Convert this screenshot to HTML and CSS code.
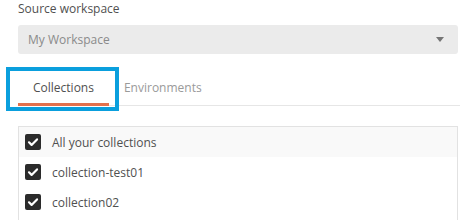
FILE: index.html
```html
<!DOCTYPE html>
<html>
<head>
<meta charset="utf-8">
<link rel="stylesheet" href="styles.css">
</head>
<body>
<div class="panel">
  <div class="label">Source workspace</div>
  <div class="select">
    <span class="select-value">My Workspace</span>
    <svg class="caret" width="8" height="5" viewBox="0 0 8 5"><path d="M0 0h8L4 5z" fill="#757575"/></svg>
  </div>
  <div class="tabs">
    <div class="tab active">Collections</div>
    <div class="tab">Environments</div>
    <div class="highlight"></div>
  </div>
  <div class="list">
    <div class="row head">
      <span class="check"><svg width="16" height="16" viewBox="0 0 16 16"><path d="M4 8.3l2.6 2.6L12 5.4" fill="none" stroke="#fff" stroke-width="2.2" stroke-linecap="round" stroke-linejoin="round"/></svg></span>
      <span class="name">All your collections</span>
    </div>
    <div class="row">
      <span class="check"><svg width="16" height="16" viewBox="0 0 16 16"><path d="M4 8.3l2.6 2.6L12 5.4" fill="none" stroke="#fff" stroke-width="2.2" stroke-linecap="round" stroke-linejoin="round"/></svg></span>
      <span class="name">collection-test01</span>
    </div>
    <div class="row">
      <span class="check"><svg width="16" height="16" viewBox="0 0 16 16"><path d="M4 8.3l2.6 2.6L12 5.4" fill="none" stroke="#fff" stroke-width="2.2" stroke-linecap="round" stroke-linejoin="round"/></svg></span>
      <span class="name">collection02</span>
    </div>
  </div>
</div>
</body>
</html>
```
FILE: styles.css
```css
html, body {
  margin: 0;
  padding: 0;
  background: #fff;
}
body {
  font-family: "Open Sans", "Noto Sans", sans-serif;
  font-size: 12px;
  color: #505050;
}
.panel {
  padding-left: 18px;
  width: 440px;
}
.label {
  line-height: 18px;
  color: #505050;
}
.select {
  margin-top: 7px;
  height: 29px;
  background: #ebebeb;
  border-radius: 3px;
  display: flex;
  align-items: center;
  justify-content: space-between;
  padding: 0 14px 0 10px;
}
.select-value {
  color: #8a8a8a;
}
.caret {
  display: block;
}
.tabs {
  position: relative;
  margin-top: 16px;
  display: flex;
  border-bottom: 1px solid #e6e6e6;
  width: 442px;
}
.tab {
  padding: 9px 15px 6px;
  line-height: 18px;
  color: #9a9a9a;
  border-bottom: 3px solid transparent;
  margin-bottom: -1px;
}
.tab.active {
  color: #505050;
  border-bottom-color: #e4714c;
}
.highlight {
  position: absolute;
  left: -12px;
  top: -3px;
  width: 105px;
  height: 36px;
  border: 4.5px solid #0a9fdd;
}
.list {
  margin-top: 20px;
  border: 1px solid #e2e2e2;
  border-bottom: none;
  height: 120px;
}
.row {
  height: 30px;
  display: flex;
  align-items: center;
  padding-left: 6px;
  gap: 11px;
}
.row.head {
  background: #f9f9f9;
}
.check {
  width: 16px;
  height: 16px;
  border-radius: 2px;
  background: #2b2b2b;
  display: block;
}
.check svg {
  display: block;
}
.name {
  color: #505050;
}
```
